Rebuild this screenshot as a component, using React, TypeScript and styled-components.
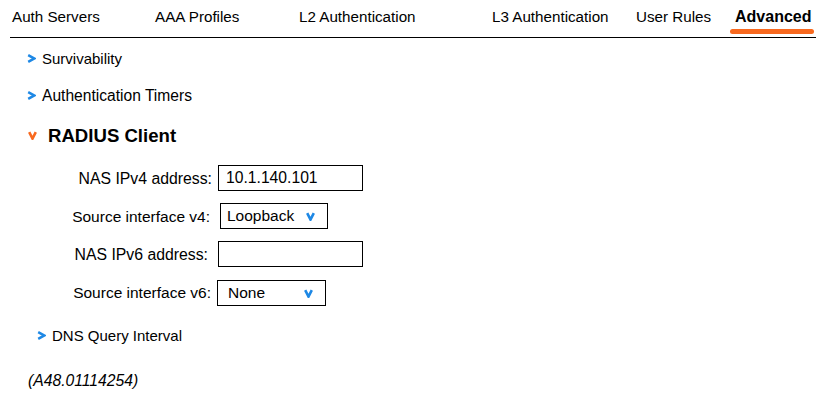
import React from "react";
import styled, { createGlobalStyle } from "styled-components";

const GlobalStyle = createGlobalStyle`
  html, body { margin: 0; padding: 0; background: #fff; }
  body { font-family: "Liberation Sans", Arial, sans-serif; color: #000; }
  * { box-sizing: border-box; }
`;

const Page = styled.div`
  width: 825px;
  height: 398px;
  overflow: hidden;
  background: #fff;
`;

const TabBar = styled.nav`
  display: flex;
  height: 38px;
  margin: 0 9px 0 10px;
  padding-left: 2px;
  border-bottom: 1px solid #000;
`;

const Tab = styled.div<{ $w?: number; $active?: boolean }>`
  position: relative;
  flex: 0 0 ${(p) => (p.$w ? `${p.$w}px` : "auto")};
  padding-top: ${(p) => (p.$active ? 7.5 : 8)}px;
  font-size: ${(p) => (p.$active ? 16 : 15.2)}px;
  line-height: 17px;
  font-weight: ${(p) => (p.$active ? 700 : 400)};
  white-space: nowrap;
  ${(p) =>
    p.$active &&
    `
    &::after {
      content: "";
      position: absolute;
      left: -5px;
      right: -3px;
      top: 29px;
      height: 5px;
      border-radius: 3px;
      background: #f8691f;
    }
  `}
`;

const Content = styled.div`
  display: flex;
  flex-direction: column;
  align-items: flex-start;
  padding-left: 27px;
`;

const SectionRow = styled.div<{ $top: number; $indent?: number; $size?: number }>`
  display: flex;
  align-items: center;
  gap: 6px;
  margin-top: ${(p) => p.$top}px;
  margin-left: ${(p) => p.$indent ?? 0}px;
  font-size: ${(p) => p.$size ?? 15}px;
  line-height: 17px;
`;

const OpenRow = styled.div`
  display: flex;
  align-items: center;
  gap: 11px;
  margin-top: 21px;
  margin-left: 1px;
  font-size: 18.6px;
  line-height: 21px;
  font-weight: 700;
`;

const Form = styled.div`
  display: grid;
  grid-template-columns: 184px auto;
  grid-auto-rows: 26px;
  column-gap: 7px;
  row-gap: 12px;
  align-items: center;
  margin-top: 19px;
`;

const Label = styled.label<{ $shift?: number; $size?: number }>`
  justify-self: end;
  font-size: ${(p) => p.$size ?? 15.5}px;
  line-height: 17px;
  white-space: nowrap;
  margin-right: ${(p) => p.$shift ?? 0}px;
`;

const TextBox = styled.div`
  width: 145px;
  height: 26px;
  border: 1px solid #000;
  padding-left: 7px;
  display: flex;
  align-items: center;
  font-size: 15.7px;
`;

const SelectBox = styled.div<{ $offset?: number; $w: number; $drop?: number; $pad?: number }>`
  width: ${(p) => p.$w}px;
  height: 26px;
  margin-left: ${(p) => p.$offset ?? 0}px;
  margin-top: ${(p) => p.$drop ?? 0}px;
  border: 1px solid #000;
  padding: 0 12px 0 ${(p) => p.$pad ?? 6}px;
  display: flex;
  align-items: center;
  justify-content: space-between;
  font-size: 15.5px;
`;

const Version = styled.div`
  margin-top: 28px;
  margin-left: 1px;
  font-size: 15.7px;
  line-height: 17px;
  font-style: italic;
`;

const ChevronRight = () => (
  <svg width="9" height="9" viewBox="0 0 9 9" style={{ display: "block" }}>
    <path d="M1.2 1.2 L7.4 4.5 L1.2 7.8" fill="none" stroke="#1e88e5" strokeWidth="2.6" strokeLinejoin="miter" />
  </svg>
);

const ChevronDown = ({ color }: { color: string }) => (
  <svg width="9" height="9" viewBox="0 0 9 9" style={{ display: "block" }}>
    <path d="M1.2 1.2 L4.5 7.6 L7.8 1.2" fill="none" stroke={color} strokeWidth="2.6" strokeLinejoin="miter" />
  </svg>
);

const tabs = [
  { label: "Auth Servers", w: 143 },
  { label: "AAA Profiles", w: 144 },
  { label: "L2 Authentication", w: 193 },
  { label: "L3 Authentication", w: 144 },
  { label: "User Rules", w: 99 },
];

export default function App() {
  return (
    <Page>
      <GlobalStyle />
      <TabBar>
        {tabs.map((t) => (
          <Tab key={t.label} $w={t.w}>
            {t.label}
          </Tab>
        ))}
        <Tab $active>Advanced</Tab>
      </TabBar>
      <Content>
        <SectionRow $top={12}>
          <ChevronRight />
          <span>Survivability</span>
        </SectionRow>
        <SectionRow $top={20} $size={15.6}>
          <ChevronRight />
          <span>Authentication Timers</span>
        </SectionRow>
        <OpenRow>
          <ChevronDown color="#f8691f" />
          <span>RADIUS Client</span>
        </OpenRow>
        <Form>
          <Label $shift={-1} $size={15.8}>NAS IPv4 address:</Label>
          <TextBox>10.1.140.101</TextBox>
          <Label $shift={1}>Source interface v4:</Label>
          <SelectBox $w={108} $offset={2}>
            <span>Loopback</span>
            <ChevronDown color="#1e88e5" />
          </SelectBox>
          <Label $shift={3} $size={15.8}>NAS IPv6 address:</Label>
          <TextBox />
          <Label>Source interface v6:</Label>
          <SelectBox $w={109} $offset={-1} $drop={2} $pad={10}>
            <span>None</span>
            <ChevronDown color="#1e88e5" />
          </SelectBox>
        </Form>
        <SectionRow $top={22} $indent={10}>
          <ChevronRight />
          <span>DNS Query Interval</span>
        </SectionRow>
        <Version>(A48.01114254)</Version>
      </Content>
    </Page>
  );
}
